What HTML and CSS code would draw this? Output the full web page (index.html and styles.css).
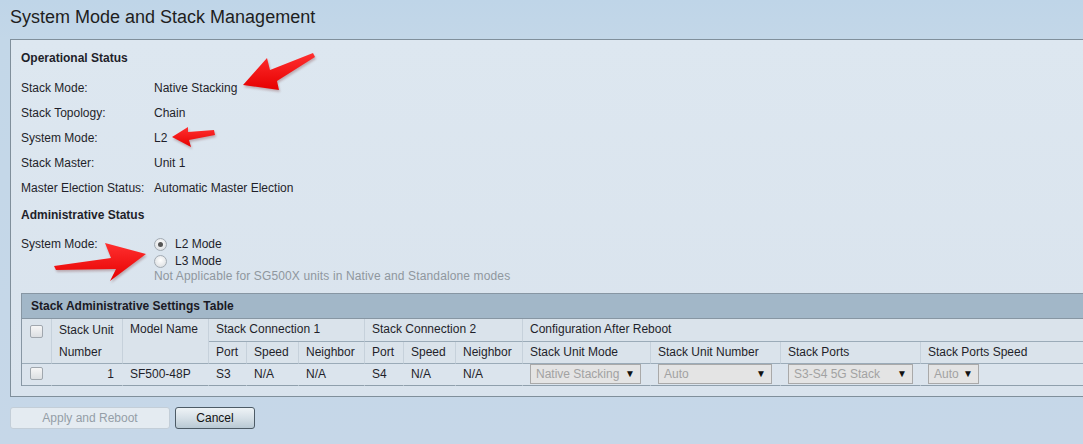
FILE: index.html
```html
<!DOCTYPE html>
<html>
<head>
<meta charset="utf-8">
<title>System Mode and Stack Management</title>
<link rel="stylesheet" href="styles.css">
</head>
<body>
<div class="page">
  <h1 class="title">System Mode and Stack Management</h1>
  <div class="panel">
    <div class="section-head">Operational Status</div>
    <div class="kv"><span class="k">Stack Mode:</span><span class="v">Native Stacking</span></div>
    <div class="kv"><span class="k">Stack Topology:</span><span class="v">Chain</span></div>
    <div class="kv"><span class="k">System Mode:</span><span class="v">L2</span></div>
    <div class="kv"><span class="k">Stack Master:</span><span class="v">Unit 1</span></div>
    <div class="kv"><span class="k">Master Election Status:</span><span class="v">Automatic Master Election</span></div>
    <div class="section-head admin">Administrative Status</div>
    <div class="mode-row">
      <span class="k">System Mode:</span>
      <div class="radios">
        <label class="radio-line"><span class="radio checked"></span>L2 Mode</label>
        <label class="radio-line"><span class="radio"></span>L3 Mode</label>
        <div class="note">Not Applicable for SG500X units in Native and Standalone modes</div>
      </div>
    </div>
    <div class="stack-table">
      <div class="table-title">Stack Administrative Settings Table</div>
      <table>
        <colgroup>
          <col class="c-cb"><col class="c-unit"><col class="c-model">
          <col class="c-port"><col class="c-speed"><col class="c-nb">
          <col class="c-port2"><col class="c-speed"><col class="c-nb2">
          <col class="c-sum"><col class="c-sun"><col class="c-sp"><col class="c-sps">
        </colgroup>
        <thead>
          <tr>
            <th rowspan="2" class="cb-cell"><span class="checkbox"></span></th>
            <th rowspan="2" class="wrap">Stack Unit Number</th>
            <th rowspan="2" class="top">Model Name</th>
            <th colspan="3">Stack Connection 1</th>
            <th colspan="3">Stack Connection 2</th>
            <th colspan="4" class="last">Configuration After Reboot</th>
          </tr>
          <tr>
            <th>Port</th><th>Speed</th><th>Neighbor</th>
            <th>Port</th><th>Speed</th><th>Neighbor</th>
            <th>Stack Unit Mode</th><th>Stack Unit Number</th><th>Stack Ports</th><th class="last">Stack Ports Speed</th>
          </tr>
        </thead>
        <tbody>
          <tr>
            <td class="cb-cell"><span class="checkbox"></span></td>
            <td class="num">1</td>
            <td>SF500-48P</td>
            <td>S3</td><td>N/A</td><td>N/A</td>
            <td>S4</td><td>N/A</td><td>N/A</td>
            <td><span class="select w-mode"><span class="sel-text">Native Stacking</span><span class="caret">▼</span></span></td>
            <td><span class="select w-unit"><span class="sel-text">Auto</span><span class="caret">▼</span></span></td>
            <td><span class="select w-ports"><span class="sel-text">S3-S4 5G Stack</span><span class="caret">▼</span></span></td>
            <td class="last"><span class="select w-speed"><span class="sel-text">Auto</span><span class="caret">▼</span></span></td>
          </tr>
        </tbody>
      </table>
    </div>
  </div>
  <div class="buttons">
    <button class="btn btn-disabled" disabled>Apply and Reboot</button>
    <button class="btn btn-cancel">Cancel</button>
  </div>

  <svg class="annotations" width="1083" height="444" viewBox="0 0 1083 444">
    <defs>
      <linearGradient id="red" x1="0" y1="0" x2="0" y2="1">
        <stop offset="0" stop-color="#ff3030"/>
        <stop offset="1" stop-color="#e60000"/>
      </linearGradient>
    </defs>
    <polygon class="arrow" points="243,85 267,58 270,70 313,53 315,57 277,81 279,90"/>
    <polygon class="arrow" points="172,137 188,127 188,132 214,130 215,135 189,140 191,147"/>
    <polygon class="arrow" points="146,254 105,243 111,258 54,266 56,270 116,269 110,281"/>
  </svg>
</div>
</body>
</html>
```

FILE: styles.css
```css
html, body {
  margin: 0;
  padding: 0;
}
body {
  width: 1083px;
  height: 444px;
  overflow: hidden;
  background: linear-gradient(180deg, #bfd5e8 0px, #c3d7e8 40px, #c6d7e8 444px);
  font-family: "Liberation Sans", Arial, sans-serif;
  font-size: 12px;
  color: #1f1f2a;
}
.page {
  position: relative;
  width: 1083px;
  height: 444px;
}
.title {
  margin: 0;
  padding-left: 10px;
  height: 39px;
  line-height: 34px;
  font-size: 18px;
  font-weight: normal;
  color: #1e1e1e;
}
.panel {
  margin-left: 10px;
  width: 1100px;
  box-sizing: border-box;
  border: 1px solid #808f9b;
  border-right: none;
  background: linear-gradient(180deg, #dde7f0 0%, #d9e3ed 100%);
  padding: 0 0 10px 10px;
}
.section-head {
  font-weight: bold;
  line-height: 36px;
  height: 36px;
}
.section-head.admin {
  line-height: 28px;
  height: 28px;
}
.kv {
  display: grid;
  grid-template-columns: 133px 1fr;
  line-height: 25px;
  height: 25px;
}
.mode-row {
  display: grid;
  grid-template-columns: 133px 1fr;
  padding-top: 7px;
  line-height: 17px;
}
.radios {
  display: flex;
  flex-direction: column;
}
.radio-line {
  display: flex;
  align-items: center;
  height: 17px;
}
.radio {
  display: inline-block;
  box-sizing: border-box;
  width: 13px;
  height: 13px;
  border-radius: 50%;
  border: 1px solid #a3abb3;
  background: radial-gradient(circle at 50% 40%, #ffffff 0%, #e6e8ea 60%, #d2d6da 100%);
  margin-right: 8px;
  position: relative;
}
.radio.checked::after {
  content: "";
  position: absolute;
  left: 3px;
  top: 3px;
  width: 5px;
  height: 5px;
  border-radius: 50%;
  background: #555;
}
.note {
  color: #8f979e;
  line-height: 13px;
  height: 13px;
  letter-spacing: 0.13px;
}
.stack-table {
  margin-top: 10px;
  border-left: 1px solid #8796a3;
  border-top: 1px solid #8796a3;
}
.table-title {
  height: 24px;
  line-height: 24px;
  background: #a2b7c8;
  font-weight: bold;
  padding-left: 9px;
  border-bottom: 1px solid #8796a3;
  color: #1a1a24;
}
table {
  border-collapse: separate;
  border-spacing: 0;
  table-layout: fixed;
  width: 1068px;
}
col.c-cb { width: 30px; }
col.c-unit { width: 71px; }
col.c-model { width: 86px; }
col.c-port { width: 38px; }
col.c-speed { width: 52px; }
col.c-nb { width: 66px; }
col.c-port2 { width: 39px; }
col.c-nb2 { width: 67px; }
col.c-sum { width: 128px; }
col.c-sun { width: 130px; }
col.c-sp { width: 140px; }
col.c-sps { width: 170px; }
th, td {
  padding: 0 7px;
  height: 21px;
  line-height: 21px;
  text-align: left;
  font-weight: normal;
  white-space: nowrap;
  overflow: hidden;
  border-right: 1px solid #c6d1db;
  border-bottom: 1px solid #9babb8;
  background: #dae3eb;
}
th.wrap {
  white-space: normal;
  line-height: 22px;
  vertical-align: top;
}
th.top {
  vertical-align: top;
}
th.cb-cell {
  vertical-align: top;
}
.cb-cell {
  text-align: center;
  padding: 0;
}
td {
  background: #dbe4ed;
  border-right-color: transparent;
  border-bottom-color: #8f9fac;
}
td.num {
  text-align: right;
  padding-right: 8px;
}
.checkbox {
  display: inline-block;
  box-sizing: border-box;
  width: 13px;
  height: 13px;
  border: 1px solid #a0a7ae;
  border-radius: 2px;
  background: linear-gradient(180deg, #f6f6f6, #dcdfe2);
  vertical-align: middle;
  margin-top: -2px;
}
th.cb-cell .checkbox {
  margin-top: 3px;
}
.select {
  display: inline-flex;
  align-items: center;
  justify-content: space-between;
  box-sizing: border-box;
  height: 20px;
  padding: 0 5px 0 5px;
  border: 1px solid #a9a9a9;
  background: #e4e4e4;
  color: #a2a2a2;
  vertical-align: middle;
  line-height: 18px;
  margin-top: -1px;
}
.sel-text {
  flex: 0 0 auto;
}
.caret {
  flex: 0 0 auto;
  margin-left: 3px;
  color: #111;
  font-size: 10px;
}
.w-mode { width: 111px; }
.w-unit { width: 114px; }
.w-ports { width: 125px; }
.w-speed { width: 51px; }
.buttons {
  display: flex;
  gap: 5px;
  margin: 10px 0 0 10px;
}
.btn {
  font-family: "Liberation Sans", Arial, sans-serif;
  font-size: 12px;
  height: 22px;
  border-radius: 3px;
  padding: 0;
  margin: 0;
  box-sizing: border-box;
}
.btn-disabled {
  width: 160px;
  color: #949ea7;
  background: #e4ebf1;
  border: 1px solid #c3ced8;
}
.btn-cancel {
  width: 80px;
  color: #111;
  border: 1px solid #4d5b66;
  background: linear-gradient(180deg, #eef3f6 0%, #d6e0e7 50%, #b9c9d4 100%);
}
.annotations {
  position: absolute;
  left: 0;
  top: 0;
  pointer-events: none;
}
.arrow {
  fill: url(#red);
  filter: drop-shadow(1px 2px 1px rgba(90, 0, 0, 0.25));
}
```
